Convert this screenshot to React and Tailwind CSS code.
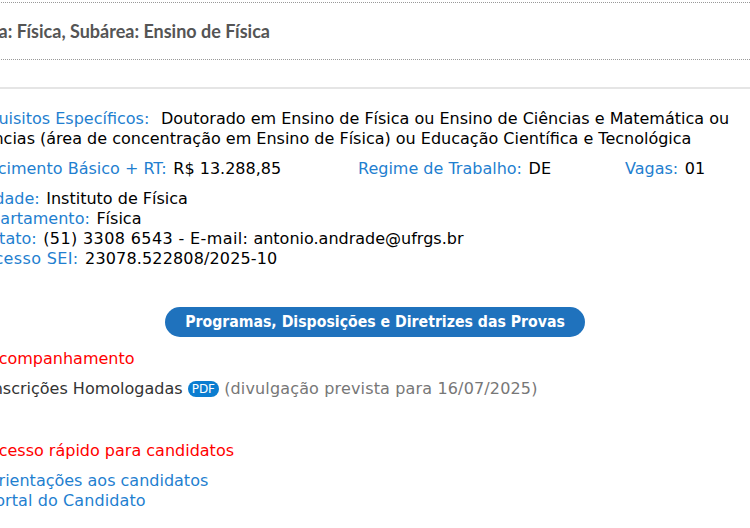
function Label({ children, className = "" }) {
  return <span className={`mr-[1.5px] text-[#1f7fd0] ${className}`}>{children}</span>;
}

export default function App() {
  return (
    <div className="w-[750px] h-[528px] overflow-hidden bg-white font-['DejaVu_Sans',sans-serif] text-[16px] leading-[20px] text-black">
      <div className="w-[800px] -ml-[32px]">
        <div className="mt-[2px] h-[58px] border-y border-dotted border-[#999] flex items-center">
          <h2 className="font-['Lato',sans-serif] font-bold text-[18px] text-[#555] leading-[24px] ml-[2px]">Área: Física, Subárea: Ensino de Física</h2>
        </div>
        <div className="mt-[27px] border-t-2 border-[#e5e5e5]"></div>
        <p className="mt-[20px]"><Label>Requisitos Específicos:</Label>&nbsp; Doutorado em Ensino de Física ou Ensino de Ciências e Matemática ou<br />Ciências (área de concentração em Ensino de Física) ou Educação Científica e Tecnológica</p>
        <div className="mt-[10px] flex">
          <span className="w-[390px]"><Label>Vencimento Básico + RT:</Label> R$ 13.288,85</span>
          <span className="w-[267px]"><Label>Regime de Trabalho:</Label> DE</span>
          <span><Label>Vagas:</Label> 01</span>
        </div>
        <div className="mt-[10px]">
          <div><Label>Unidade:</Label> Instituto de Física</div>
          <div><Label>Departamento:</Label> Física</div>
          <div><Label>Contato:</Label> <span className="tracking-[0.38px]">(51) 3308 6543 - E-mail:</span> antonio.andrade@ufrgs.br</div>
          <div><Label className="tracking-[0.35px]">Processo SEI:</Label> <span className="tracking-[0.15px]">23078.522808/2025-10</span></div>
        </div>
        <div className="mt-[38px] pl-[197px]">
          <a className="h-[30px] w-[420px] rounded-full bg-[#1f72bd] text-white font-bold text-[15.7px] [font-stretch:condensed] flex items-center justify-center">Programas, Disposições e Diretrizes das Provas</a>
        </div>
        <div className="pl-[20px]">
          <p className="mt-[12px] text-[#f00]">Acompanhamento</p>
          <p className="mt-[10px] text-[#333]">Inscrições Homologadas <span className="inline-block align-[1px] bg-[#0b7dd0] text-white text-[12px] leading-[16px] px-[4px] rounded-full">PDF</span> <span className="text-[#777] tracking-[0.15px]">(divulgação prevista para 16/07/2025)</span></p>
          <p className="mt-[42px] text-[#f00]">Acesso rápido para candidatos</p>
          <div className="mt-[10px] -ml-[2px] text-[#1f7fd0]">
            <div>Orientações aos candidatos</div>
            <div className="tracking-[0.1px]">Portal do Candidato</div>
          </div>
        </div>
      </div>
    </div>
  );
}
